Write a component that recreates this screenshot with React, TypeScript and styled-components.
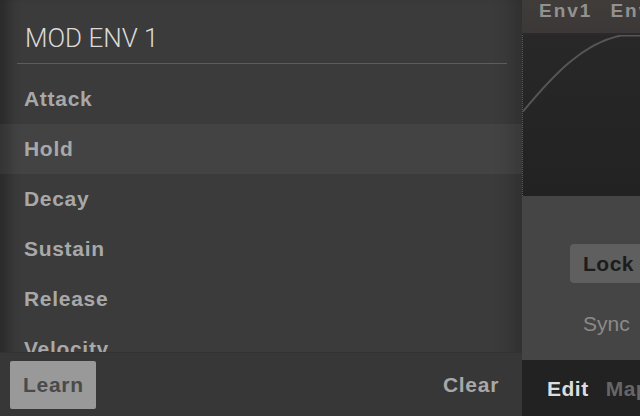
import React from "react";
import styled, { createGlobalStyle } from "styled-components";

const Global = createGlobalStyle`
  html, body { margin: 0; padding: 0; background: #2a2a2a; }
  body { font-family: "Liberation Sans", Arial, sans-serif; }
`;

const Screen = styled.div`
  display: flex;
  width: 640px;
  height: 416px;
  overflow: hidden;
`;

const Drawer = styled.div`
  width: 522px;
  flex: none;
  display: flex;
  flex-direction: column;
  background: #3b3b3b;
  box-shadow: inset 18px 0 14px -10px rgba(0, 0, 0, 0.3),
    inset -26px 0 20px -18px rgba(0, 0, 0, 0.22);
  position: relative;
  z-index: 2;
`;

const Header = styled.div`
  height: 64px;
  margin: 0 15px 0 17px;
  padding: 20px 0 8px 8px;
  box-sizing: border-box;
  border-bottom: 1px solid #5c5c5c;
  display: flex;
  align-items: center;
  font-family: Roboto, "Noto Sans", sans-serif;
  font-weight: 300;
  font-size: 26px;
  color: #dadada;
`;

const List = styled.div`
  flex: 1;
  overflow: hidden;
  padding-top: 10px;
`;

const Row = styled.div<{ $active?: boolean }>`
  height: 50px;
  display: flex;
  align-items: center;
  padding-left: 24px;
  font-weight: 700;
  font-size: 21px;
  letter-spacing: 0.7px;
  color: #a8a8a8;
  background: ${(p) => (p.$active ? "rgba(255,255,255,0.045)" : "transparent")};
`;

const Footer = styled.div`
  height: 64px;
  flex: none;
  display: flex;
  align-items: center;
  justify-content: space-between;
  padding: 0 23px 0 10px;
  background: #373737;
  border-top: 1px solid #323232;
  box-sizing: border-box;
`;

const LearnButton = styled.div`
  width: 86px;
  height: 48px;
  border-radius: 2px;
  background: #999999;
  color: #4a4a4a;
  font-weight: 700;
  font-size: 21px;
  letter-spacing: 0.7px;
  display: flex;
  align-items: center;
  padding-left: 13px;
  box-sizing: border-box;
  margin-top: 1px;
`;

const TextButton = styled.div`
  font-weight: 700;
  font-size: 21px;
  letter-spacing: 0.7px;
  color: #a8a8a8;
`;

const Main = styled.div`
  flex: 1;
  display: flex;
  flex-direction: column;
  min-width: 0;
`;

const TabBar = styled.div`
  height: 35px;
  flex: none;
  box-sizing: border-box;
  background: linear-gradient(#403c3a, #3b3837);
  border-bottom: 2px solid #2b2929;
  display: flex;
  align-items: flex-start;
  gap: 18px;
  padding: 0 0 0 17px;
  white-space: nowrap;
`;

const Tab = styled.div`
  font-weight: 700;
  font-size: 19px;
  letter-spacing: 2px;
  color: #939190;
  line-height: 22px;
`;

const Graph = styled.div`
  height: 161px;
  flex: none;
  background: linear-gradient(#282828, #222222);
  border-left: 1px dotted #6b5648;
  box-sizing: border-box;
  position: relative;
  overflow: hidden;
`;

const Curve = styled.svg`
  display: block;
  width: 100%;
  height: 100%;
`;

const Controls = styled.div`
  height: 164px;
  flex: none;
  background: #454545;
  display: flex;
  flex-direction: column;
  align-items: flex-start;
  padding: 48px 0 0 48px;
  box-sizing: border-box;
`;

const LockButton = styled.div`
  width: 90px;
  height: 39px;
  border-radius: 4px 0 0 4px;
  background: #5f5f5f;
  color: #1c1c1c;
  font-weight: 700;
  font-size: 21px;
  letter-spacing: 0.5px;
  display: flex;
  align-items: center;
  padding-left: 13px;
  box-sizing: border-box;
`;

const Label = styled.div`
  margin-top: 29px;
  margin-left: 13px;
  font-size: 21px;
  color: #8a8a8a;
`;

const BottomBar = styled.div`
  flex: 1;
  background: #222222;
  display: flex;
  align-items: center;
  gap: 17px;
  padding: 0 0 0 25px;
  white-space: nowrap;
`;

const BottomTab = styled.div<{ $active?: boolean }>`
  font-weight: 700;
  font-size: 21px;
  letter-spacing: 0.5px;
  color: ${(p) => (p.$active ? "#dddddd" : "#666666")};
  margin-top: 2px;
`;

const params = ["Attack", "Hold", "Decay", "Sustain", "Release", "Velocity"];

export default function App() {
  return (
    <>
      <Global />
      <Screen>
        <Drawer>
          <Header>MOD ENV 1</Header>
          <List>
            {params.map((p) => (
              <Row key={p} $active={p === "Hold"}>
                {p}
              </Row>
            ))}
          </List>
          <Footer>
            <LearnButton>Learn</LearnButton>
            <TextButton>Clear</TextButton>
          </Footer>
        </Drawer>
        <Main>
          <TabBar>
            <Tab>Env1</Tab>
            <Tab>Env2</Tab>
          </TabBar>
          <Graph>
            <Curve viewBox="0 0 117 160" preserveAspectRatio="none">
              <path
                d="M0 76 C 30 40, 60 8, 98 0.5 L 117 0.5"
                fill="none"
                stroke="#565656"
                strokeWidth="2"
              />
            </Curve>
          </Graph>
          <Controls>
            <LockButton>Lock</LockButton>
            <Label>Sync</Label>
          </Controls>
          <BottomBar>
            <BottomTab $active>Edit</BottomTab>
            <BottomTab>Map</BottomTab>
          </BottomBar>
        </Main>
      </Screen>
    </>
  );
}
